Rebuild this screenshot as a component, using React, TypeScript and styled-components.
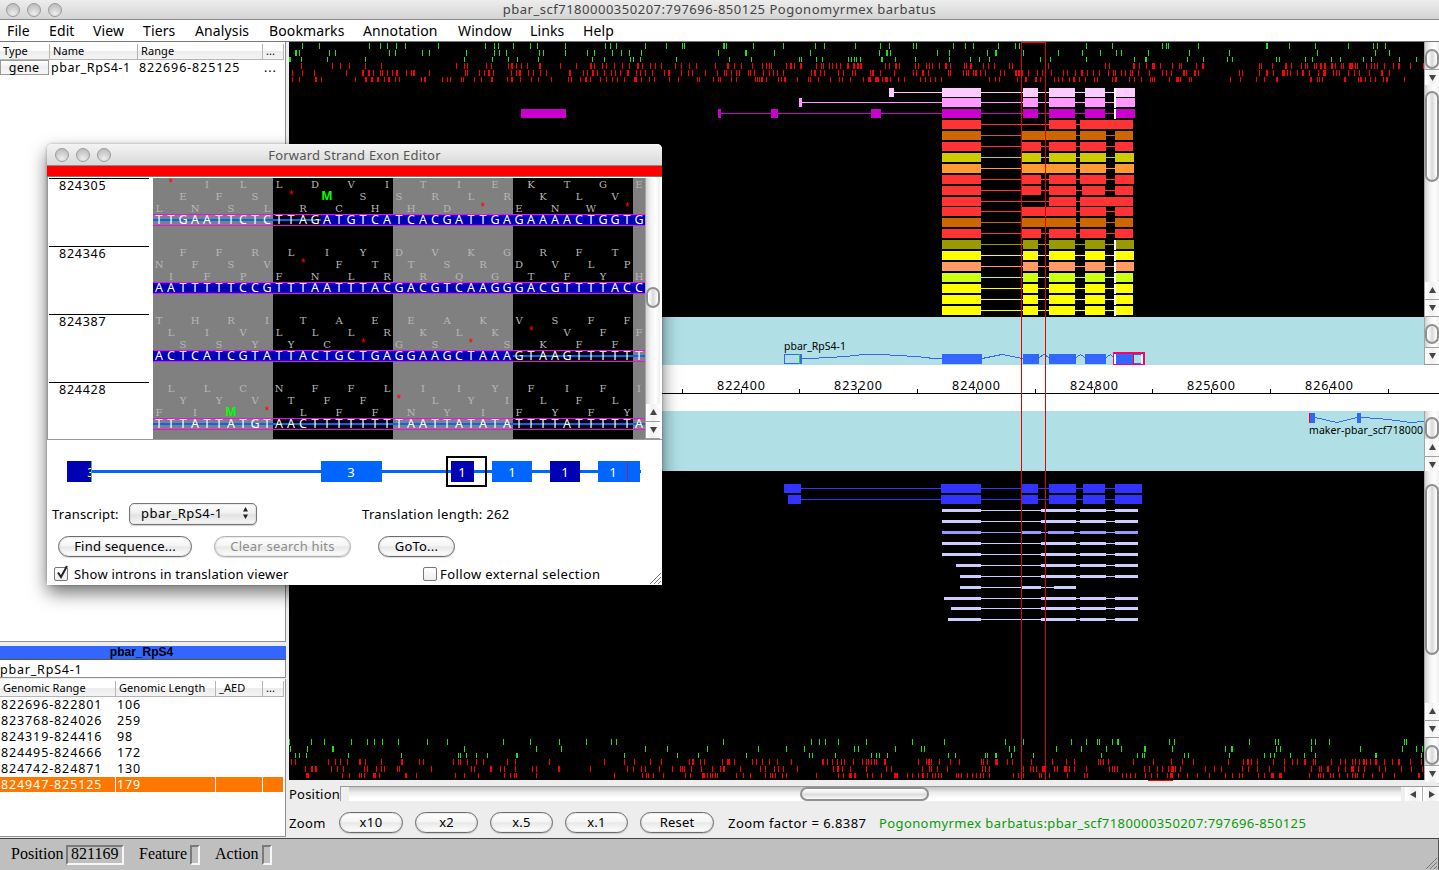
import React from 'react';
import styled, { createGlobalStyle, css } from 'styled-components';

const GlobalStyle = createGlobalStyle`
  * { box-sizing: border-box; }
  html, body { margin: 0; padding: 0; background: #ededed; overflow: hidden; }
  body { font-family: "Noto Sans", "Open Sans", sans-serif; color: #000; }
`;

/* ---------- data ---------- */

// Codon marks: "x" is one pixel wide, "x:w" is w pixels wide.
const TOP_MARKS: string[] = [
  '302 319 369 380 387 396 405 438 485 494 498 513 530 537 565 605 610 616 645 723:2 666 682 684 726 753 783 815 824 855 880 889 913 916 953 965 973 998 1015 1019 1086 1112 1162 1166 1168 1198 1266:2 1289 1315 1348 1373 1377 1385',
  '295:2 299 329 335 389 395 422 429 466 494 499 506 539 543 565 587 594 612 621 629 641 718 745:2 774 810 879 886:2 890 937 949 987 995:2 1023 1058 1082 1100 1116 1121 1148 1189 1229 1317 1375 1389',
  '289:2 301 327 365 464 492 508 517 538 592 604 630 633 640 676 729 751 799 801 816 822 848 851 854 856 860 881:2 895 915 949 970 979 989 1040 1050 1086 1134 1145:2 1187 1203 1227 1232 1276 1279 1305 1312 1331 1340 1363 1371 1399 1416',
  '301 332 340 349 365 381 456 464 467 486 491 508 511:2 516 521 527 539:2 560 576 590:2 594 602 606 614 622 629 637:2 642 650 655 661 675 681 689 696 715 727:2 734 741 752 762 766 769 771 786 790:2 794 800:2 816 821 823 829 832 836 840 847:2 853:2 857:2 860:2 885 889 895:2 899 915 918 926 929 932 939 945:2 950 964 966 970:2 983 988 994 1009 1012 1048 1105 1109 1133:2 1139 1146 1152:3 1160 1172 1179 1181 1196 1202:2 1259 1261 1272 1285:2 1291 1301 1305 1307 1314 1316 1320:2 1324:2 1331:2 1335 1341 1343 1349:4 1355 1357 1366 1371 1374 1377 1384 1393 1398:2 1410 1423',
  '292 302 314 346 362:2 368:2 373 380 382 387 392 396:2 406 411 413:2 429 465 467 479 484 488:2 493 511 516 519:2 528 533 540 546 569:2 583 587 592:2 597 604 611 615 620 627:2 636 640 645 652 664 668:2 681 688 692 705 717 724 726 731 736 739 748 750 754 763 769 773 777 783 811 814:2 820 824 838 843 852 855 870 872:2 880 894 913 916 922:2 928 948 950 963 966 968 973 975:2 980 985 1000 1004 1015:2 1018:2 1022 1028 1037 1042 1051 1063 1067 1075 1081:2 1087 1093 1099 1108 1113 1115 1121 1125 1130 1132 1138 1149 1162 1166 1171 1183:2 1186 1194:2 1198 1239 1242 1259 1266:2 1273 1282:3 1287 1290 1297 1302:2 1309 1318 1323:3 1333 1336 1339 1348 1354 1359 1369 1381:2 1389',
  '292 299 315:2 321 355 365:2 371:2 377:2 384 388:2 395 399 421 424:2 442 447 450 461 463 474 481 491:2 507 511:2 520 531 538 551 568 571 580 585:2 590 600 606 612 617 624 634:3 641 649 654 669 678 697 699 713 718 720 731 736 755 757 759 761:2 766 778 781 784:2 797 808 810 818 830 839 842 850 863 868:3 875:4 882 885:3 890 898 904 920 925 930 935 941 989 995 999 1017 1025:2 1035:2 1040 1054 1058 1062 1069 1073:2 1079 1085 1094 1097 1112 1115:2 1129 1134 1141 1150 1152 1154 1169 1176:3 1180 1189 1191 1230 1240 1256 1264 1276:2 1310:2 1317 1319 1322 1344:2 1358 1360:2 1365 1370 1375 1383 1386:2 1404',
];
const TOP_ROWS = [43, 50, 57, 63, 70, 77];

const BOTTOM_MARKS: string[] = [
  '289 311 324 351 367 374 382 398 427 447 503 530 559 586 611 616 723 811 819 825 838 866 912 944 1005 1023 1071 1086 1097 1099 1112 1117:2 1169 1174 1249 1275 1278 1311 1315 1329 1404 1406',
  '290 307 332:2 464 536 561 645 667 707 758 786 804 854 858 895 921 924 1009 1014 1056 1081 1106 1121 1144:2 1172 1225 1231:2 1276 1280 1311 1360 1402 1416 1422',
  '295 299 306 348 401 458 460 466 476 487 516:2 624 677 698 746 809 812 835 871 876 879 887 948 955 985 987 995:2 1011 1033 1101 1137 1142 1144 1184 1188 1229 1264 1270 1274 1290 1304 1315 1375:2 1421',
  '291 295 328 335 340 347 359:2 365 381 401:2 419 423 453 458 460 467 476 483 507 515 549 604 624 634 650 661 689 692:2 700 704 722 727:3 734 752 756 762 769 777 791 822:2 827 832 837 841 844 853 862 866 868 871 874 876 884:2 918 926 928:2 931 939 950 959 981 983 987 995:3 1007 1012 1021 1031 1052 1066 1074 1098 1100 1103 1108 1133 1153 1171 1182 1193 1228 1243 1247:2 1251 1257 1273 1284 1292 1297 1304:2 1313 1315 1331 1340 1345 1352 1355 1359 1363:2 1366 1370 1375:2 1384 1392 1398:2 1410 1421',
  '305 311:2 315:2 331 337 343 364 367 376 381 384 397 399 431 471 474 490:2 500 504 515 532 536 558:2 590 627 633 641 645 659 672 680 682 684 691 701 712 720 723:2 740 760 765 774 778 783 797 833 837:2 842 850 866 886 891 922 929 931 937 947 982 985 989 1023 1030 1033 1036 1042:4 1054 1057 1064:3 1069 1074 1086 1109 1112 1114 1117 1144 1149 1157 1162 1168 1171:3 1175 1180 1205 1214 1221 1242 1248 1257 1269 1284 1311 1319 1321 1327:2 1338 1345 1351:3 1358 1364 1379 1385 1401 1411 1422',
  '306:3 342 349 359 361 364 373:3 379 405:2 416 455 464 478 504 510 514 516 536 614 642 646 648 653 663 685 690 702:3 707 710 712 715 717 736 743 750 765 770 772 775 782 786 816 838 843 849:3 854:2 867 872 881 894:4 907 912 918 922:2 927 932 935 938 941 956 958 961 967 972 976 980 983 989 1013 1018 1023 1039 1041 1049 1067 1084 1087 1122 1126 1130 1135 1145 1151 1157 1167 1170:3 1178 1187 1197 1209 1225 1232 1239 1242 1258 1264 1271:2 1273 1279:3 1309 1318 1320 1323 1330 1333 1339 1347 1352 1355 1357 1363 1372 1382 1394 1418:2',
];
const BOTTOM_ROWS = [739, 746, 753, 759, 766, 773];

type Exon = [number, number];
interface Hit { y: number; color: string; exons: Exon[]; mark?: boolean }

const A: Exon = [942, 981];
const spliced = (end: number): Exon[] => [A, [1023, 1038], [1049, 1075], [1085, 1105], [1116, end]];
const four = (end: number): Exon[] => [A, [1022, 1041], [1049, 1076], [1080, 1106], [1115, end]];
const merged = (end: number): Exon[] => [A, [1022, 1076], [1080, 1106], [1115, end]];
const gapped: Exon[] = [A, [1049, 1076], [1080, 1133]];

const FORWARD_HITS: Hit[] = [
  { y: 88, color: '#ffccff', exons: [[889, 894], ...spliced(1135)], mark: true },
  { y: 98, color: '#ff99ff', exons: [[799, 802], ...spliced(1135)], mark: true },
  { y: 109, color: '#cc00cc', exons: [[718, 721], [771, 778], [871, 881], ...spliced(1135)], mark: true },
  { y: 109, color: '#cc00cc', exons: [[521, 566]] },
  { y: 120, color: '#ff3333', exons: gapped },
  { y: 131, color: '#cc6600', exons: merged(1133) },
  { y: 142, color: '#ff3333', exons: four(1133) },
  { y: 153, color: '#cccc00', exons: four(1134) },
  { y: 164, color: '#ff9933', exons: merged(1134) },
  { y: 175, color: '#ff3333', exons: four(1134) },
  { y: 186, color: '#ff3333', exons: [A, [1022, 1041], [1049, 1076], [1082, 1105], [1115, 1133]] },
  { y: 197, color: '#ff3333', exons: gapped },
  { y: 207, color: '#ff3333', exons: merged(1133) },
  { y: 218, color: '#cc6600', exons: merged(1133) },
  { y: 229, color: '#ff3333', exons: four(1133) },
  { y: 240, color: '#999900', exons: spliced(1134), mark: true },
  { y: 251, color: '#ffff00', exons: spliced(1134), mark: true },
  { y: 262, color: '#ff9966', exons: spliced(1134), mark: true },
  { y: 273, color: '#ccff11', exons: spliced(1133), mark: true },
  { y: 284, color: '#ffff00', exons: spliced(1133), mark: true },
  { y: 295, color: '#ffff00', exons: spliced(1133), mark: true },
  { y: 306, color: '#ffff00', exons: spliced(1133), mark: true },
];

const blueTail: Exon[] = [[941, 981], [1021, 1038], [1049, 1076], [1083, 1105], [1115, 1142]];
const thin = (start: number): Exon[] => [[start, 981], [1041, 1076], [1080, 1106], [1115, 1138]];
const REVERSE_HITS: Hit[] = [
  { y: 484, color: '#3333ff', exons: [[784, 801], ...blueTail] },
  { y: 495, color: '#3333ff', exons: [[788, 801], ...blueTail] },
];
const THIN_HITS: Hit[] = [
  { y: 509, color: '#ccccff', exons: thin(942) },
  { y: 520, color: '#ccccff', exons: thin(942) },
  { y: 531, color: '#9999ff', exons: [A, [1022, 1041], [1048, 1074], [1080, 1106], [1115, 1138]] },
  { y: 542, color: '#ccccff', exons: thin(942) },
  { y: 553, color: '#ccccff', exons: thin(942) },
  { y: 564, color: '#ccccff', exons: thin(956) },
  { y: 575, color: '#ccccff', exons: thin(960) },
  { y: 586, color: '#ccccff', exons: [[960, 981], [1021, 1041], [1054, 1076]] },
  { y: 597, color: '#d0c8ff', exons: thin(944) },
  { y: 607, color: '#ccccff', exons: thin(951) },
  { y: 618, color: '#ccccff', exons: thin(948) },
];

interface SeqRow { pos: string; frames: [number, string][]; bases: string; exon: [number, number] }
const SEQ_ROWS: SeqRow[] = [
  { pos: '824305', frames: [[1, '*ILLDVITIEKTGE'], [2, 'EFS*MSSRLRKLV'], [0, 'LNSLRCHHD*ENW*']], bases: 'TTGAATTCTCTTAGATGTCATCACGATTGAGAAAACTGGTG', exon: [14, 41] },
  { pos: '824346', frames: [[2, 'FFRLIYDVKGRFT'], [0, 'NFSV*FTTSRDVLP'], [1, 'IFPFNLRRQGTFYH']], bases: 'AATTTTTCCGTTTAATTTACGACGTCAAGGGACGTTTTACC', exon: [0, 41] },
  { pos: '824387', frames: [[0, 'THRITAEEAKVSFF'], [1, 'LIVLLLRKLK*VFF'], [2, 'SSYYC*GS*SKFF']], bases: 'ACTCATCGTATTACTGCTGAGGAAGCTAAAGTAAGTTTTTT', exon: [0, 30] },
  { pos: '824428', frames: [[1, 'LLCNFFLIIYFIFI'], [2, 'YYVTFF*LYILFL'], [0, 'FIM*LFFNYIFYFY']], bases: 'TTTATTATGTAACTTTTTTTTAATTATATATTTTATTTTTA', exon: [0, 0] },
];

const EXON_ROWS = [
  ['822696-822801', '106'],
  ['823768-824026', '259'],
  ['824319-824416', '98'],
  ['824495-824666', '172'],
  ['824742-824871', '130'],
  ['824947-825125', '179'],
];

/* ---------- window chrome ---------- */

const Desktop = styled.div`
  width: 1439px; height: 870px; display: flex; flex-direction: column;
  position: relative; overflow: hidden; background: #ededed;
`;
const TitleBar = styled.div<{ $h: number; $inactive?: boolean }>`
  height: ${p => p.$h}px; flex: none; display: grid;
  grid-template-columns: 120px 1fr 120px; align-items: center;
  background: linear-gradient(${p => (p.$inactive ? '#f4f4f4, #d9d9d9' : '#ededed, #d4d4d4')});
  border-bottom: 1px solid #8c8c8c; font-size: 13px; color: ${p => (p.$inactive ? '#555' : '#444')};
  line-height: 18px;
`;
const Lights = styled.div<{ $left: number }>`
  display: flex; gap: 7px; padding-left: ${p => p.$left}px;
`;
const Light = styled.i`
  width: 14px; height: 14px; border-radius: 50%; border: 1px solid #9a9a9a;
  background: radial-gradient(circle at 50% 80%, #eee 0, #cfcfcf 50%, #b4b4b4 100%);
`;
const Title = styled.span<{ $ls: number; $up?: boolean }>`
  text-align: center; white-space: nowrap; letter-spacing: ${p => p.$ls}px;
  ${p => p.$up && 'padding-bottom: 2px;'}
`;
const MenuBar = styled.nav`
  height: 22px; flex: none; background: #fff; border-bottom: 1px solid #777;
  display: flex; padding: 0 0 0 7px; font-size: 14px; line-height: 21px;
`;
const MenuItem = styled.span<{ $w: number }>`
  width: ${p => p.$w}px; white-space: nowrap; letter-spacing: 0.12px;
`;
const Body = styled.div` flex: 1; display: flex; min-height: 0; `;

/* ---------- left panel ---------- */

const Left = styled.div` width: 289px; flex: none; display: flex; flex-direction: column; `;
const Pane = styled.div<{ $h: number; $gap?: number }>`
  width: 286px; height: ${p => p.$h}px; background: #fff; flex: none;
  border-right: 1px solid #8f8f8f; border-bottom: 1px solid #8f8f8f;
  margin-bottom: ${p => p.$gap || 0}px; padding-top: 2px;
`;
const Cols = styled.div<{ $c: string }>` display: grid; grid-template-columns: ${p => p.$c}; width: 284px; `;
const HeadCell = styled.span`
  height: 16px; font-size: 11px; line-height: 14px; padding-left: 3px; letter-spacing: 0.08px;
  white-space: nowrap; border-right: 1px solid #b5b5b5; border-bottom: 1px solid #b5b5b5;
  background: linear-gradient(#fff 0, #fff 45%, #ececec 50%, #f4f4f4 100%);
`;
const Cell = styled.span<{ $sel?: boolean; $pad?: number; $ls?: number }>`
  height: 16px; font-size: 12.5px; line-height: 16px; padding-left: ${p => p.$pad ?? 1}px;
  white-space: nowrap; letter-spacing: ${p => p.$ls ?? 0.88}px;
  ${p => p.$sel && css`background: #ff7700; color: #fff; height: 15px; border-right: 1px solid #fff;`}
`;
const TypeButton = styled.span`
  width: 49px; height: 15px; border: 1px solid #9a9a9a; font-size: 12.5px; line-height: 13px;
  text-align: center; letter-spacing: 0.3px; background: linear-gradient(#fff, #eee 50%, #f8f8f8);
  padding-right: 1px;
`;
const GeneBar = styled.div`
  width: 286px; height: 14px; background: #3366ff; border-bottom: 1px solid #555; flex: none;
  font: bold 12px/13px "Liberation Sans", Arial, sans-serif; text-align: center; padding-right: 3px;
`;
const GeneName = styled.div`
  width: 286px; height: 18px; margin-bottom: 1px; background: #fff; flex: none; font-size: 12.5px;
  line-height: 20px; letter-spacing: 0.8px; border: solid #8f8f8f; border-width: 0 1px 1px 0;
`;

/* ---------- scroll bars ---------- */

const VBar = styled.div<{ $h: number; $pad: number }>`
  width: 15px; height: ${p => p.$h}px; flex: none; display: flex; flex-direction: column;
  padding-top: ${p => p.$pad}px; border-left: 1px solid #a5a5a5; border-bottom: 1px solid #999;
  background: linear-gradient(90deg, #d2d2d2, #f0f0f0 30%, #fff 70%, #eee);
`;
const VThumb = styled.div<{ $h: number }>`
  height: ${p => p.$h}px; flex: none; border: 2px solid #8f8f8f; border-radius: 7px;
  background: linear-gradient(90deg, #fff, #eee 30%, #d8d8d8 50%, #fafafa 90%);
`;
const Spring = styled.i` flex: 1; `;
const ArrowBox = styled.div<{ $h: number; $w?: number; $line?: boolean }>`
  height: ${p => p.$h}px; ${p => p.$w && `width: ${p.$w}px;`} flex: none; display: flex;
  align-items: center; justify-content: center;
  background: linear-gradient(90deg, #fff, #f0f0f0 50%, #fff);
  ${p => p.$line && (p.$w ? 'border-left: 1px solid #b0b0b0;' : 'border-top: 1px solid #a0a0a0;')}
`;
const Arrow = ({ d }: { d: 'up' | 'down' | 'left' | 'right' }) => {
  const pts = { up: '0,6 3.5,0 7,6', down: '0,0 7,0 3.5,6', left: '6,0 6,7 0,3.5', right: '1,0 7,3.5 1,7' };
  return <svg width="7" height="7"><polygon points={pts[d]} fill="#444" /></svg>;
};
function Scroll({ h, pad, thumb, up }: { h: number; pad: number; thumb: number; up?: boolean }) {
  return (
    <VBar $h={h} $pad={pad}>
      <VThumb $h={thumb} />
      <Spring />
      {up && <ArrowBox $h={17}><Arrow d="up" /></ArrowBox>}
      <ArrowBox $h={17} $line><Arrow d="down" /></ArrowBox>
    </VBar>
  );
}

/* ---------- genome view ---------- */

const Right = styled.div` flex: 1; min-width: 0; display: flex; flex-direction: column; `;
const Genome = styled.div` position: relative; height: 739px; flex: none; display: flex; flex-direction: column; `;
const Strip = styled.div` display: flex; flex: none; `;
const Bars = styled.div` display: flex; flex-direction: column; `;
const Canvas = styled.svg<{ $bg: string }>`
  display: block; flex: none; background: ${p => p.$bg}; shape-rendering: crispEdges;
  font-family: "Noto Sans", sans-serif;
`;
const Cursor = styled.svg` position: absolute; left: 0; top: 0; shape-rendering: crispEdges; `;

function Marks({ rows, ys }: { rows: string[]; ys: number[] }) {
  return (
    <>
      {rows.map((r, i) => (
        <g key={i} fill={i < 3 ? '#22dd22' : '#ff0000'}>
          {r.split(' ').map(m => {
            const [x, w] = m.split(':').map(Number);
            return <rect key={m} x={x} y={ys[i]} width={w || 1} height={i % 3 === 2 ? 5 : 6} />;
          })}
        </g>
      ))}
    </>
  );
}
function Hits({ hits, h }: { hits: Hit[]; h: number }) {
  const mid = Math.floor(h / 2);
  return (
    <>
      {hits.map((t, i) => {
        const x0 = t.exons[0][0];
        const x1 = t.exons[t.exons.length - 1][1];
        return (
          <g key={i} fill={t.color}>
            <rect x={x0} y={t.y + mid} width={x1 - x0} height={1} />
            {t.exons.map(([a, b]) => <rect key={a} x={a} y={t.y} width={b - a} height={h} />)}
            {t.mark && <rect x={1114} y={t.y} width={2} height={10} fill="#fff" />}
          </g>
        );
      })}
    </>
  );
}

function GenomeView() {
  return (
    <Genome>
      <Strip>
        <Canvas $bg="#000" width={1135} height={275} viewBox="289 42 1135 275">
          <Marks rows={TOP_MARKS} ys={TOP_ROWS} />
          <Hits hits={FORWARD_HITS} h={9} />
        </Canvas>
        <Bars>
          <Scroll h={43} pad={7} thumb={20} />
          <Scroll h={232} pad={6} thumb={91} up />
        </Bars>
      </Strip>
      <Strip>
        <Canvas $bg="#b0e0e6" width={1135} height={48} viewBox="289 317 1135 48">
          <text x="784" y="350" fontSize="10.5" textLength="62">pbar_RpS4-1</text>
          <g fill="none" stroke="#3366ff" strokeWidth="1">
            <path d="M802 358.5H810L828 357.5L846 356.5L864 354.5H881L898 355.5L916 356.5L934 358.5H942M982 358.5L1002 354.5L1023 358.5M1039 357.5L1044 354.5L1049 357.5M1076 357.5L1080.500 354.5L1085 357.5M1106 357.5L1110.500 354.5L1114 357.5" />
            <rect x="784.5" y="354.5" width="16" height="9" />
          </g>
          <g fill="#3366ff">
            <rect x="800" y="354" width="2" height="10" />
            <rect x="799" y="354" width="1" height="10" fill="#22dd22" />
            <rect x="942" y="354" width="40" height="10" />
            <rect x="1023" y="354" width="16" height="10" />
            <rect x="1049" y="354" width="27" height="10" />
            <rect x="1085" y="354" width="21" height="10" />
          </g>
          <rect x="1113" y="352" width="32" height="13" fill="#ff0066" />
          <rect x="1114" y="354" width="29" height="10" fill="#fff" />
          <rect x="1116" y="354" width="25" height="10" fill="#3366ff" />
          <rect x="1134" y="355" width="7" height="8" fill="#b0e0e6" />
          <rect x="1133" y="354" width="1" height="10" fill="#ff0000" />
        </Canvas>
        <Scroll h={48} pad={7} thumb={20} />
      </Strip>
      <Canvas $bg="#fff" width={1150} height={46} viewBox="289 365 1150 46">
        <rect x="289" y="393" width="1150" height="1" />
        {[682, 741, 799, 858, 917, 976, 1035, 1094, 1152, 1211, 1270, 1329, 1388].map(x => (
          <rect key={x} x={x} y="389" width="1" height="4" />
        ))}
        {[741, 858, 976, 1094, 1211, 1329].map((x, i) => (
          <text key={x} x={x - 24} y="390" fontSize="12.5" textLength="48">{822400 + i * 800}</text>
        ))}
      </Canvas>
      <Strip>
        <Canvas $bg="#b0e0e6" width={1135} height={60} viewBox="289 411 1135 60">
          <path d="M1315 417.500L1337 422.500L1357 417.500M1361 417.500L1378 418.500L1396 420.500L1411 422.500L1424 421.500" fill="none" stroke="#3366ff" />
          <rect x="1309" y="413" width="1" height="10" fill="#ff0000" />
          <rect x="1310" y="413" width="5" height="10" fill="#3366ff" />
          <rect x="1357" y="413" width="4" height="10" fill="#3366ff" />
          <text x="1309" y="434" fontSize="10.5" textLength="114">maker-pbar_scf718000</text>
        </Canvas>
        <Scroll h={60} pad={6} thumb={22} up />
      </Strip>
      <Strip>
        <Canvas $bg="#000" width={1135} height={309} viewBox="289 471 1135 309">
          <Hits hits={REVERSE_HITS} h={9} />
          <Hits hits={THIN_HITS} h={3} />
          <Marks rows={BOTTOM_MARKS} ys={BOTTOM_ROWS} />
        </Canvas>
        <Bars>
          <Scroll h={267} pad={13} thumb={171} up />
          <Scroll h={42} pad={7} thumb={20} />
        </Bars>
      </Strip>
      <Cursor width={1150} height={740} viewBox="289 42 1150 740">
        <rect x="1021" y="42" width="25" height="1" fill="#f00" />
        <rect x="1021" y="42" width="1" height="738" fill="#e60000" />
        <rect x="1045" y="42" width="1" height="738" fill="#e60000" />
        <rect x="1148" y="780" width="25" height="1" fill="#f00" />
      </Cursor>
    </Genome>
  );
}

/* ---------- controls ---------- */

const Text = styled.span<{ $ls?: number; $w?: number; $color?: string }>`
  font-size: 13px; line-height: 16px; white-space: nowrap; letter-spacing: ${p => p.$ls ?? 0.22}px;
  ${p => p.$w && `width: ${p.$w}px;`} color: ${p => p.$color ?? '#000'}; flex: none;
`;
const PositionRow = styled.div` display: flex; height: 23px; padding-top: 5px; align-items: flex-start; `;
const HBar = styled.div`
  flex: 1; height: 15px; display: flex; border-top: 1px solid #9a9a9a; border-left: 1px solid #999;
  background: linear-gradient(#c4c4c4, #ececec 40%, #fff 80%);
`;
const HCap = styled.i<{ $w: number; $end?: boolean }>`
  width: ${p => p.$w}px; background: #efefef;
  border-radius: ${p => (p.$end ? '0 8px 8px 0' : '0')};
`;
const HThumb = styled.div`
  width: 129px; border: 2px solid #8f8f8f; border-radius: 8px; margin-left: 451px;
  background: linear-gradient(#fff, #eee 35%, #dcdcdc 55%, #fafafa);
`;
const ZoomRow = styled.div` display: flex; align-items: center; height: 26px; margin-top: 6px; padding-bottom: 1px; `;
const Pill = styled.button<{ $w: number; $gap?: number; $off?: boolean; $ls?: number }>`
  width: ${p => p.$w}px; height: 21px; margin: 0 ${p => p.$gap || 0}px 0 0; padding: 0; flex: none;
  border: 1px solid ${p => (p.$off ? '#b0b0b0' : '#6c6c6c')}; border-radius: 11px;
  background: linear-gradient(#fff 0, #f5f5f5 45%, #e8e8e8 52%, #fff 100%);
  box-shadow: inset 0 0 2px #bbb, 0 1px 1px rgba(0,0,0,.15);
  font: 13px/17px "Noto Sans", sans-serif; letter-spacing: ${p => p.$ls ?? 0.2}px; white-space: nowrap;
  color: ${p => (p.$off ? '#8c8c8c' : '#000')};
`;
const StatusBar = styled.footer`
  height: 32px; flex: none; background: #bfbfbf; border-top: 1px solid #444; border-right: 1px solid #555;
  display: flex; align-items: center; font: 16px "Liberation Serif", "Times New Roman", serif;
  position: relative; padding: 1px 0 0 11px;
`;
const StatusLabel = styled.span<{ $w: number }>`
  width: ${p => p.$w}px; white-space: nowrap; line-height: 18px; padding-bottom: 2px;
`;
const Field = styled.span<{ $w: number; $gap: number }>`
  width: ${p => p.$w}px; height: 20px; margin-right: ${p => p.$gap}px; padding-left: 3px; line-height: 14px;
  border: 2px solid; border-color: #7a7a7a #f6f6f6 #f6f6f6 #7a7a7a;
`;
const Grip = styled.svg` position: absolute; right: 1px; bottom: 1px; `;
const GripLines = () => (
  <Grip width="12" height="12">
    <path d="M1 12L12 1M5 12L12 5M9 12L12 9" stroke="#777" fill="none" />
  </Grip>
);

/* ---------- exon editor ---------- */

const Dialog = styled.section`
  position: absolute; left: 47px; top: 144px; width: 615px; height: 441px; background: #fff;
  border-radius: 5px 5px 0 0; display: flex; flex-direction: column; overflow: hidden;
`;
const Shadow = styled.div`
  position: absolute; left: 47px; top: 144px; width: 615px; height: 441px; border-radius: 5px;
  box-shadow: 0 8px 18px rgba(0,0,0,.55), 0 0 3px rgba(0,0,0,.3);
`;
const RedBar = styled.div` height: 11px; background: #f00; border-bottom: 1px solid #777; flex: none; `;
const Editor = styled.div`
  height: 263px; flex: none; display: flex; padding: 1px 1px 0 1px; border-bottom: 1px solid #999;
  border-left: 1px solid #999; overflow: hidden;
`;
const PosCol = styled.div` width: 104px; flex: none; `;
const Pos = styled.div`
  width: 100px; height: 68px; border-top: 1px solid #000; font-size: 12.5px; line-height: 14px;
  letter-spacing: 0.75px; padding-left: 10px;
`;
const SeqCol = styled.div`
  width: 492px; height: 261px; flex: none; overflow: hidden;
  background: repeating-linear-gradient(90deg, #808080 0, #808080 120px, #000 120px, #000 240px);
`;
const SeqBlock = styled.div` height: 68px; `;
const Frame = styled.div<{ $start: number }>`
  height: 12px; display: flex; padding-left: ${p => p.$start * 12}px;
`;
const Residue = styled.span<{ $kind: 'stop' | 'met' | 'aa' }>`
  width: 36px; flex: none; height: 12px;
  > b { display: block; width: 12px; text-align: center; font: 10px/14px "DejaVu Serif", serif; color: #b8b8b8; }
  ${p => p.$kind === 'met' && css`> b { font: bold 12px/12px "Open Sans", sans-serif; color: #0f0; }`}
  ${p => p.$kind === 'stop' && css`> b { font: 12px/12px "Liberation Mono", monospace; color: #f00; }`}
`;
const Bases = styled.div`
  height: 12px; display: flex; border: solid #f0f; border-width: 1px 0;
`;
const Base = styled.span<{ $exon: boolean }>`
  width: 12px; height: 10px; flex: none; text-align: center; color: #fff; font-size: 12.5px; line-height: 10px;
  background: ${p => (p.$exon ? '#0000b4' : 'linear-gradient(transparent 4px, #0066ff 4px, #0066ff 6px, transparent 6px)')};
`;
const Overview = styled.svg` display: block; flex: none; shape-rendering: crispEdges; font-family: "Noto Sans", sans-serif; `;
const FormRow = styled.div<{ $h: number; $pl: number }>`
  height: ${p => p.$h}px; padding-left: ${p => p.$pl}px; display: flex; align-items: center; flex: none;
`;
const Select = styled.div`
  width: 128px; height: 22px; border: 1px solid #777; border-radius: 5px; flex: none; margin-right: 105px;
  background: linear-gradient(#fff, #f0f0f0 45%, #e2e2e2 55%, #f8f8f8); display: flex; align-items: center;
  box-shadow: inset 0 0 2px #bbb, 0 1px 1px rgba(0,0,0,.2); padding: 0 7px 2px 11px; justify-content: space-between;
`;
const Check = styled.span<{ $gap: number }>`
  width: 14px; height: 14px; border: 1px solid #777; border-radius: 2px; flex: none;
  background: linear-gradient(#fff, #eee); margin-right: ${p => p.$gap}px; position: relative;
  > svg { position: absolute; left: 1px; top: -3px; }
`;

const kindOf = (c: string) => (c === '*' ? 'stop' : c === 'M' ? 'met' : 'aa');

function ExonEditor() {
  return (
    <>
      <Shadow />
      <Dialog>
        <TitleBar $h={22} $inactive>
          <Lights $left={8}><Light /><Light /><Light /></Lights>
          <Title $ls={0.2}>Forward Strand Exon Editor</Title>
        </TitleBar>
        <RedBar />
        <Editor>
          <PosCol>{SEQ_ROWS.map(r => <Pos key={r.pos}>{r.pos}</Pos>)}</PosCol>
          <SeqCol>
            {SEQ_ROWS.map(r => (
              <SeqBlock key={r.pos}>
                {r.frames.map(([s, f], i) => (
                  <Frame key={i} $start={s}>
                    {f.split('').map((c, j) => <Residue key={j} $kind={kindOf(c)}><b>{c}</b></Residue>)}
                  </Frame>
                ))}
                <Bases>
                  {r.bases.split('').map((c, j) => (
                    <Base key={j} $exon={j >= r.exon[0] && j < r.exon[1]}>{c}</Base>
                  ))}
                </Bases>
              </SeqBlock>
            ))}
          </SeqCol>
          <Scroll h={261} pad={109} thumb={21} up />
        </Editor>
        <Overview width={615} height={60} viewBox="47 440 615 60">
          <rect x="92" y="470" width="549" height="3" fill="#0066ff" />
          <g fill="#0000b4">
            <rect x="67" y="461" width="25" height="21" />
            <rect x="451" y="461" width="23" height="21" />
            <rect x="550" y="461" width="30" height="21" />
          </g>
          <g fill="#0066ff">
            <rect x="321" y="461" width="61" height="21" />
            <rect x="492" y="461" width="40" height="21" />
            <rect x="598" y="461" width="42" height="21" />
          </g>
          <rect x="627" y="461" width="1" height="21" fill="#a02060" />
          <rect x="447" y="457" width="39" height="29" fill="none" stroke="#000" strokeWidth="2" />
          <g fill="#fff" fontSize="13" textAnchor="middle">
            <text x="91" y="477">3</text>
            <text x="351" y="477">3</text>
            <text x="462" y="477">1</text>
            <text x="512" y="477">1</text>
            <text x="565" y="477">1</text>
            <text x="613" y="477">1</text>
          </g>
          <rect x="92" y="461" width="6" height="9" fill="#fff" />
          <rect x="92" y="473" width="6" height="9" fill="#fff" />
          <rect x="92" y="470" width="6" height="3" fill="#0066ff" />
          <rect x="91" y="461" width="1" height="21" fill="#4c4" />
        </Overview>
        <FormRow $h={28} $pl={5}>
          <Text $w={77}>Transcript:</Text>
          <Select>
            <Text $ls={0.45}>pbar_RpS4-1</Text>
            <svg width="7" height="12"><path d="M1 4.500L3.500 0L6 4.500ZM1 7.500H6L3.500 12Z" fill="#222" /></svg>
          </Select>
          <Text $ls={0.34}>Translation length: 262</Text>
        </FormRow>
        <FormRow $h={37} $pl={11}>
          <Pill $w={134} $gap={22}>Find sequence...</Pill>
          <Pill $w={137} $gap={27} $off>Clear search hits</Pill>
          <Pill $w={77}>GoTo...</Pill>
        </FormRow>
        <FormRow $h={17} $pl={7}>
          <Check $gap={6}>
            <svg width="14" height="14"><path d="M2 7.500L5 12L11 1" fill="none" stroke="#222" strokeWidth="2" /></svg>
          </Check>
          <Text $w={349}>Show introns in translation viewer</Text>
          <Check $gap={3} />
          <Text $ls={0.4}>Follow external selection</Text>
        </FormRow>
        <GripLines />
      </Dialog>
    </>
  );
}

/* ---------- page ---------- */

const MENUS: [string, number][] = [
  ['File', 42], ['Edit', 44], ['View', 50], ['Tiers', 52], ['Analysis', 74], ['Bookmarks', 94],
  ['Annotation', 95], ['Window', 72], ['Links', 53], ['Help', 40],
];

export default function App() {
  return (
    <Desktop>
      <GlobalStyle />
      <TitleBar $h={20}>
        <Lights $left={6}><Light /><Light /><Light /></Lights>
        <Title $ls={0.51} $up>pbar_scf7180000350207:797696-850125 Pogonomyrmex barbatus</Title>
      </TitleBar>
      <MenuBar>{MENUS.map(([m, w]) => <MenuItem key={m} $w={w}>{m}</MenuItem>)}</MenuBar>
      <Body>
        <Left>
          <Pane $h={600} $gap={4}>
            <Cols $c="50px 88px 125px 21px">
              <HeadCell>Type</HeadCell><HeadCell>Name</HeadCell><HeadCell>Range</HeadCell><HeadCell>...</HeadCell>
            </Cols>
            <Cols $c="50px 88px 125px 21px">
              <TypeButton>gene</TypeButton>
              <Cell $ls={0.55}>pbar_RpS4-1</Cell><Cell>822696-825125</Cell><Cell>...</Cell>
            </Cols>
          </Pane>
          <GeneBar>pbar_RpS4</GeneBar>
          <GeneName>pbar_RpS4-1</GeneName>
          <Pane $h={158}>
            <Cols $c="116px 100px 47px 21px">
              <HeadCell>Genomic Range</HeadCell><HeadCell>Genomic Length</HeadCell><HeadCell>_AED</HeadCell><HeadCell>...</HeadCell>
            </Cols>
            {EXON_ROWS.map(([a, b], i) => (
              <Cols key={a} $c="116px 100px 47px 21px">
                <Cell $sel={i === 5}>{a}</Cell>
                <Cell $sel={i === 5}>{b}</Cell>
                <Cell $sel={i === 5} />
                <Cell $sel={i === 5} />
              </Cols>
            ))}
          </Pane>
        </Left>
        <Right>
          <GenomeView />
          <PositionRow>
            <Text $w={51}>Position</Text>
            <HBar>
              <HCap $w={8} />
              <HThumb />
              <Spring />
              <HCap $w={4} />
              <ArrowBox $h={14} $w={17}><Arrow d="left" /></ArrowBox>
              <ArrowBox $h={14} $w={17} $line><Arrow d="right" /></ArrowBox>
            </HBar>
          </PositionRow>
          <ZoomRow>
            <Text $w={50} $ls={0.4}>Zoom</Text>
            <Pill $w={64} $gap={12} $ls={0.4}>x10</Pill>
            <Pill $w={63} $gap={12}>x2</Pill>
            <Pill $w={63} $gap={12}>x.5</Pill>
            <Pill $w={63} $gap={12}>x.1</Pill>
            <Pill $w={74} $gap={14}>Reset</Pill>
            <Text $w={151} $ls={0.45}>Zoom factor = 6.8387</Text>
            <Text $ls={0.4} $color="#0a9a0a">Pogonomyrmex barbatus:pbar_scf7180000350207:797696-850125</Text>
          </ZoomRow>
        </Right>
      </Body>
      <StatusBar>
        <StatusLabel $w={55}>Position</StatusLabel>
        <Field $w={58} $gap={15}>821169</Field>
        <StatusLabel $w={51}>Feature</StatusLabel>
        <Field $w={10} $gap={15} />
        <StatusLabel $w={47}>Action</StatusLabel>
        <Field $w={10} $gap={0} />
        <GripLines />
      </StatusBar>
      <ExonEditor />
    </Desktop>
  );
}
